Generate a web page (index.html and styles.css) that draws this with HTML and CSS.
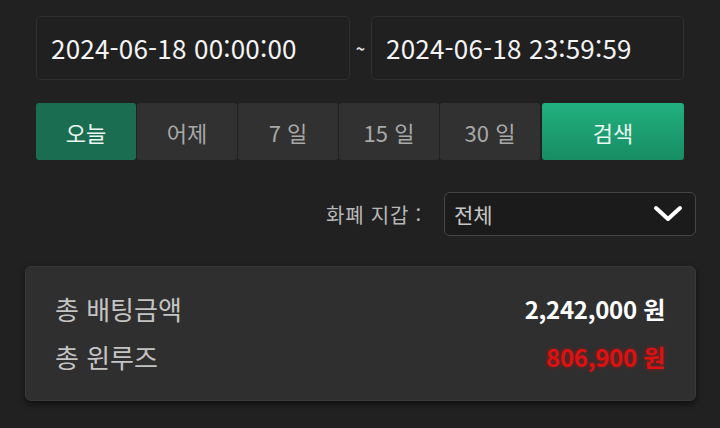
FILE: index.html
```html
<!DOCTYPE html>
<html lang="ko">
<head>
  <meta charset="UTF-8">
  <meta name="viewport" content="width=device-width, initial-scale=1.0">
  <title>배팅 내역</title>
  <link rel="stylesheet" href="styles.css">
</head>
<body>

  <div class="container">
    <div class="date-row">
      <div class="date-input">2024-06-18 00:00:00</div>
      <span class="tilde">~</span>
      <div class="date-input">2024-06-18 23:59:59</div>
    </div>

    <div class="btn-row">
      <button class="btn active">오늘</button>
      <button class="btn">어제</button>
      <button class="btn">7 일</button>
      <button class="btn">15 일</button>
      <button class="btn">30 일</button>
      <button class="btn search">검색</button>
    </div>

    <div class="currency-row">
      <span class="currency-label">화폐 지갑 :</span>
      <div class="select">
        <span>전체</span>
        <svg class="chevron" width="30" height="18" viewBox="0 0 30 18">
          <path d="M3 3 L15 14 L27 3" fill="none" stroke="#fff" stroke-width="4" stroke-linecap="round" stroke-linejoin="round"/>
        </svg>
      </div>
    </div>

    <div class="summary">
      <div class="summary-row">
        <span class="summary-label">총 배팅금액</span>
        <span class="summary-value">2,242,000 원</span>
      </div>
      <div class="summary-row">
        <span class="summary-label">총 윈루즈</span>
        <span class="summary-value loss">806,900 원</span>
      </div>
    </div>
  </div>

</body>
</html>
```

FILE: styles.css
```css
* {
  margin: 0;
  padding: 0;
  box-sizing: border-box;
}

body {
  font-family: 'Noto Sans CJK KR', 'Noto Sans', sans-serif;
  background: #212121;
  color: #fff;
  width: 720px;
  height: 428px;
  overflow: hidden;
}

.container {
  padding: 16px 24px 0 25px;
}

.date-row {
  display: grid;
  grid-template-columns: 314px 21px 313px;
  align-items: center;
  margin: 0 12px 0 11px;
}

.date-input {
  height: 64px;
  border: 1px solid #303030;
  border-radius: 5px;
  background: #202020;
  font-size: 26px;
  letter-spacing: 0.2px;
  line-height: 62px;
  padding-left: 14px;
  color: #f4f4f4;
}

.tilde {
  text-align: center;
  font-size: 16px;
  font-weight: 700;
  color: #ddd;
}

.btn-row {
  display: flex;
  gap: 1px;
  margin: 23px 12px 0 11px;
  height: 57px;
}

.btn {
  flex: 0 0 100px;
  border: none;
  border-radius: 3px;
  background: #313131;
  color: #a8a8a8;
  font-family: inherit;
  font-size: 22px;
}

.btn.active {
  background: #1b6d51;
  color: #eaf6ef;
}

.btn.search {
  flex: 1;
  margin-left: 1px;
  background: linear-gradient(#21b07f, #188d64);
  color: #e9f8f0;
}

.currency-row {
  display: flex;
  justify-content: flex-end;
  align-items: center;
  gap: 22px;
  margin-top: 32px;
}

.currency-label {
  font-size: 20px;
  letter-spacing: 0.8px;
  color: #b8b8b8;
}

.select {
  width: 252px;
  height: 44px;
  border: 1px solid #454545;
  border-radius: 6px;
  background: linear-gradient(#1c1c1c, #1a1a1a);
  display: flex;
  align-items: center;
  justify-content: space-between;
  padding: 0 12px 0 9px;
  font-size: 21px;
  color: #c8c8c8;
}

.summary {
  margin-top: 30px;
  height: 135px;
  background: #2f2f2f;
  border: 1px solid #383838;
  border-radius: 6px;
  box-shadow: 0 3px 6px rgba(0, 0, 0, 0.55);
  padding: 17px 30px 0 29px;
}

.summary-row {
  display: flex;
  justify-content: space-between;
  align-items: center;
  height: 48px;
}

.summary-label {
  font-size: 26px;
  color: #c4c4c4;
}

.summary-value {
  font-size: 24px;
  font-weight: 700;
  letter-spacing: -0.3px;
  color: #fff;
}

.summary-value.loss {
  color: #dd1111;
  text-shadow: 0 0 4px rgba(255, 0, 0, 0.45);
}
```
